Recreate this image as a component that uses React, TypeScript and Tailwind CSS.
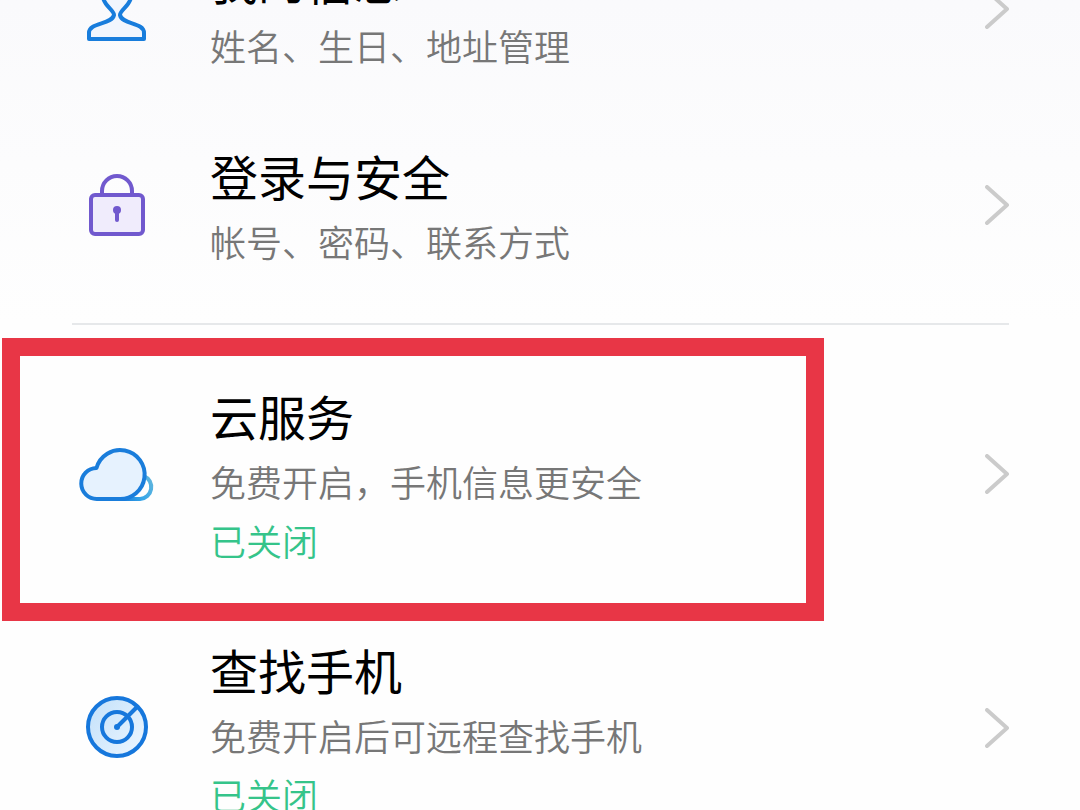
import React from 'react';

const ProfileIcon: React.FC = () => (
  <svg viewBox="0 0 90 64" className="w-[90px] h-16" fill="none" aria-hidden="true">
    <path
      d="M17 62 V56 C17 45 40 48 42 38 C42 33 32 29 31 20 C30 8 37 2 45 2 C53 2 60 8 59 20 C58 29 48 33 48 38 C50 48 72 45 72 56 V62 Z"
      fill="#f1f6fd"
      stroke="#187ddc"
      strokeWidth="4"
      strokeLinejoin="round"
    />
  </svg>
);

const LockIcon: React.FC = () => (
  <svg viewBox="0 0 90 64" className="w-[90px] h-16" fill="none" stroke="#7159ce" strokeWidth="4" aria-hidden="true">
    <path d="M30 22 V18 A15 15 0 0 1 60 18 V22" />
    <rect x="19" y="22" width="52" height="39" rx="4" fill="#f0ecfc" />
    <circle cx="45" cy="37" r="4" fill="#7159ce" stroke="none" />
    <path d="M45 38 V47" strokeLinecap="round" />
  </svg>
);

const CloudIcon: React.FC = () => (
  <svg viewBox="0 0 90 64" className="w-[90px] h-16" fill="none" strokeWidth="4" aria-hidden="true">
    <defs>
      <linearGradient id="cloudTail" x1="50" y1="57" x2="80" y2="40" gradientUnits="userSpaceOnUse">
        <stop offset="0" stopColor="#1a7ddb" />
        <stop offset="0.5" stopColor="#35a5e8" />
        <stop offset="1" stopColor="#5cb4de" />
      </linearGradient>
    </defs>
    <path d="M47 57 H68 A12 12 0 0 0 72 34" stroke="url(#cloudTail)" />
    <path
      d="M25 57 H47 A24.5 24.5 0 1 0 24.5 26 A15.5 15.5 0 0 0 25 57 Z"
      fill="#e6f2fe"
      stroke="#1a7ddb"
      strokeLinejoin="round"
    />
  </svg>
);

const RadarIcon: React.FC = () => (
  <svg viewBox="0 0 90 64" className="w-[90px] h-16" fill="none" stroke="#1677dc" strokeWidth="4" aria-hidden="true">
    <defs>
      <linearGradient id="radarFill" x1="20" y1="10" x2="72" y2="50" gradientUnits="userSpaceOnUse">
        <stop offset="0" stopColor="#c6e2fa" />
        <stop offset="1" stopColor="#eaf5ff" />
      </linearGradient>
    </defs>
    <circle cx="45" cy="31" r="29" fill="url(#radarFill)" />
    <circle cx="45" cy="31" r="15" />
    <circle cx="45" cy="31" r="3" fill="#1677dc" stroke="none" />
    <path d="M45 31 L65 11" />
  </svg>
);

const ChevronIcon: React.FC = () => (
  <svg viewBox="0 0 24 40" className="w-6 h-10 shrink-0" fill="none" aria-hidden="true">
    <path d="M2 2 L22 20 L2 38" stroke="#cbcbcb" strokeWidth="4" strokeLinecap="round" strokeLinejoin="round" />
  </svg>
);

interface SettingItem {
  title: string;
  desc: string;
  status?: string;
  icon: React.FC;
  highlighted?: boolean;
}

const accountItems: SettingItem[] = [
  { title: '我的信息', desc: '姓名、生日、地址管理', icon: ProfileIcon },
  { title: '登录与安全', desc: '帐号、密码、联系方式', icon: LockIcon },
];

const serviceItems: SettingItem[] = [
  { title: '云服务', desc: '免费开启，手机信息更安全', status: '已关闭', icon: CloudIcon, highlighted: true },
  { title: '查找手机', desc: '免费开启后可远程查找手机', status: '已关闭', icon: RadarIcon },
];

const SettingRow: React.FC<{ item: SettingItem }> = ({ item }) => {
  const Icon = item.icon;

  return (
    <li className="relative">
      <a href="#" className="flex items-center pl-[72px] pr-[71px]">
        <Icon />
        <div className="flex-1 ml-12 py-8">
          <h2 className="text-5xl leading-[72px] text-black">{item.title}</h2>
          <p className="text-4xl leading-[60px] font-[350] text-[#777777]">{item.desc}</p>
          {item.status && (
            <p className="text-4xl leading-[58px] font-[350] text-[#35c48a]">{item.status}</p>
          )}
        </div>
        <ChevronIcon />
      </a>

      {/* Red marker frame over the row */}
      {item.highlighted && (
        <div className="absolute -top-[9px] -bottom-5 left-[2px] right-64 border-[18px] border-[#e83646] pointer-events-none" />
      )}
    </li>
  );
};

export default function App() {
  return (
    <main
      lang="zh-CN"
      className="h-screen overflow-hidden bg-linear-to-b from-[#fafafc] to-[#fefefe] to-40% font-['Noto_Sans_CJK_SC',sans-serif]"
    >
      {/* List is scrolled part way past the first row */}
      <div className="-mt-[89px]">
        <ul>
          {accountItems.map((item) => (
            <SettingRow key={item.title} item={item} />
          ))}
        </ul>

        <hr className="ml-[72px] mr-[71px] mt-5 mb-[22px] border-t-2 border-[#e6e8ea]" />

        <ul>
          {serviceItems.map((item) => (
            <SettingRow key={item.title} item={item} />
          ))}
        </ul>
      </div>
    </main>
  );
}
